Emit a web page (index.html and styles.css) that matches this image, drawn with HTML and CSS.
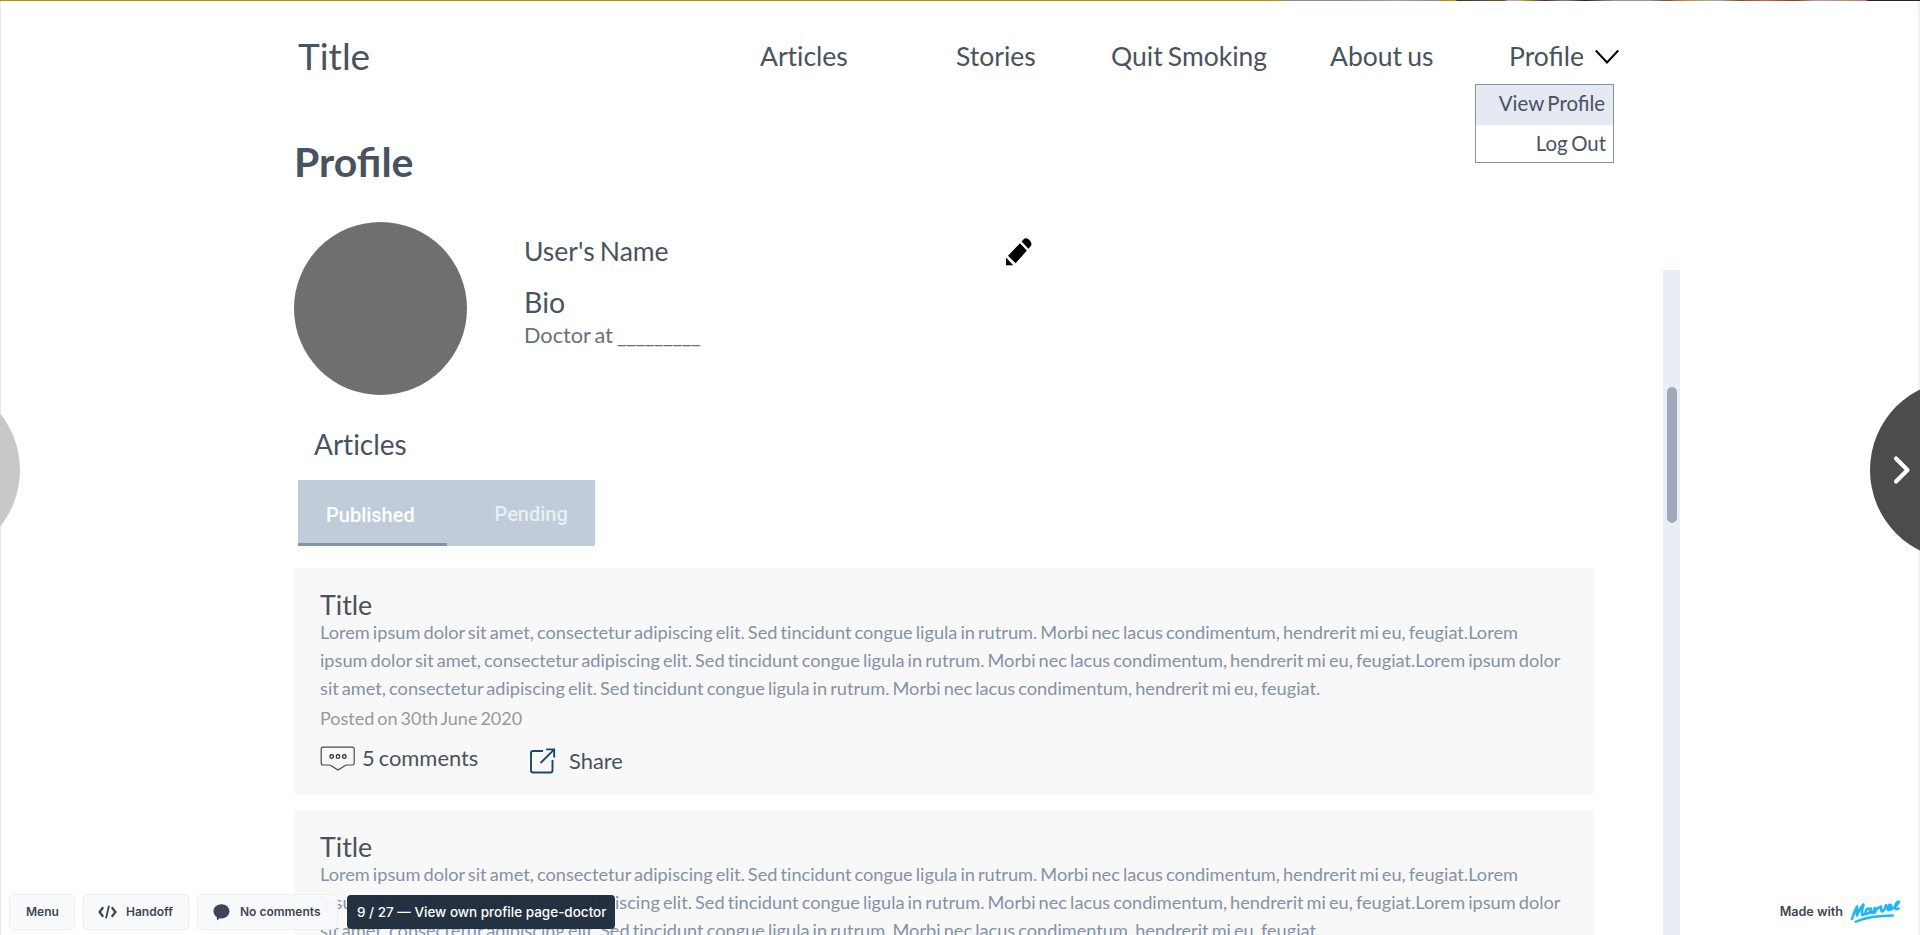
FILE: index.html
```html
<!DOCTYPE html>
<html lang="en">
<head>
<meta charset="utf-8">
<title>View own profile page-doctor</title>
<link rel="stylesheet" href="styles.css">
</head>
<body>
<div class="photo-strip"></div>
<div class="screen">
  <header class="header">
    <div class="brand">Title</div>
    <nav class="nav">
      <a>Articles</a>
      <a>Stories</a>
      <a>Quit Smoking</a>
      <a>About us</a>
      <div class="account">
        <a class="liga">Profile</a>
        <svg class="chevron" width="26" height="16" viewBox="0 0 26 16"><path d="M1.8 1.5 13 13.5 24.2 1.5" fill="none" stroke="#000" stroke-width="2"/></svg>
        <div class="menu">
          <a class="menu-item active liga">View Profile</a>
          <a class="menu-item">Log Out</a>
        </div>
      </div>
    </nav>
  </header>

  <main class="main">
    <h1 class="page-title liga">Profile</h1>
    <section class="person">
      <div class="avatar"></div>
      <div class="info">
        <div class="name">User's Name</div>
        <div class="bio">Bio</div>
        <div class="job">Doctor at <span class="blank">_________</span></div>
      </div>
      <svg class="pencil" width="26" height="28" viewBox="0 0 26 28"><path d="M14 5.2 20.8 12.6 9.6 25.3 2 17.8ZM15.6 3.6 17.4 1.5Q19.6-.8 22.6 1.3L24.4 3.2Q26.5 6 24.6 8.2L22.4 10.8ZM0 19.4 7.3 27.2H0Z"/></svg>
    </section>
    <h2 class="section-title">Articles</h2>
    <div class="tabs">
      <div class="tab current"><span>Published</span></div>
      <div class="tab"><span class="pending">Pending</span></div>
    </div>
    <div class="list">
      <article class="card">
        <h3 class="card-title">Title</h3>
        <p class="text">Lorem ipsum dolor sit amet, consectetur adipiscing elit. Sed tincidunt congue ligula in rutrum. Morbi nec lacus condimentum, hendrerit mi eu, feugiat.Lorem<br>ipsum dolor sit amet, consectetur adipiscing elit. Sed tincidunt congue ligula in rutrum. Morbi nec lacus condimentum, hendrerit mi eu, feugiat.Lorem ipsum dolor<br>sit amet, consectetur adipiscing elit. Sed tincidunt congue ligula in rutrum. Morbi nec lacus condimentum, hendrerit mi eu, feugiat.</p>
        <p class="posted">Posted on 30th June 2020</p>
        <div class="actions">
          <svg class="bubble" width="36" height="26" viewBox="0 0 36 26" fill="none" stroke="#4a4a4a" stroke-width="1.2"><path d="M3 1.2H32.5Q34.2 1.2 34.2 3V17Q34.2 19 32.5 19H27Q25.5 19 24 20.2L18 24 12 20.2Q10.5 19 9 19H3Q1.2 19 1.2 17V3Q1.2 1.2 3 1.2Z"/><g stroke="#222"><circle cx="11.7" cy="10.5" r="1.8"/><circle cx="18" cy="10.5" r="1.8"/><circle cx="24.3" cy="10.5" r="1.8"/></g></svg>
          <span class="comments">5 comments</span>
          <svg class="share-icon" width="26" height="26" viewBox="0 0 26 26" fill="none" stroke="#144a6b" stroke-width="1.9"><path d="M13 3H3Q1 3 1 5V22.5Q1 24.5 3 24.5H20.5Q22.5 24.5 22.5 22.5V12M16 1.4H24.2V9.5M24 1.6 10.5 15"/></svg>
          <span class="share">Share</span>
        </div>
      </article>
      <article class="card">
        <h3 class="card-title">Title</h3>
        <p class="text">Lorem ipsum dolor sit amet, consectetur adipiscing elit. Sed tincidunt congue ligula in rutrum. Morbi nec lacus condimentum, hendrerit mi eu, feugiat.Lorem<br>ipsum dolor sit amet, consectetur adipiscing elit. Sed tincidunt congue ligula in rutrum. Morbi nec lacus condimentum, hendrerit mi eu, feugiat.Lorem ipsum dolor<br>sit amet, consectetur adipiscing elit. Sed tincidunt congue ligula in rutrum. Morbi nec lacus condimentum, hendrerit mi eu, feugiat.</p>
      </article>
    </div>
  </main>
  <div class="track"><div class="thumb"></div></div>
</div>

<svg class="arrow prev" width="20" height="180" viewBox="0 0 20 180"><circle cx="-70" cy="90" r="90" fill="#c8c8c8"/></svg>
<svg class="arrow next" width="50" height="180" viewBox="0 0 50 180"><circle cx="90" cy="90" r="90" fill="#4c4c4c"/><path d="M26 78.5 37.5 90 26 101.5" fill="none" stroke="#fff" stroke-width="4.2" stroke-linecap="round" stroke-linejoin="round"/></svg>

<footer class="toolbar">
  <div class="btn b-menu"><span>Menu</span></div>
  <div class="btn b-handoff"><svg width="19" height="14" viewBox="0 0 19 14" fill="none" stroke="#3b4754" stroke-width="2.3"><path d="M5.2 2.2 1.6 7 5.2 11.8M13.8 2.2 17.4 7 13.8 11.8"/><path d="M11 .8 8 13.2" stroke-width="1.8"/></svg><span>Handoff</span></div>
  <div class="btn b-comments"><svg width="17" height="17" viewBox="0 0 17 17" fill="#3b4754"><path d="M8.5.3C13 .3 16.4 3.3 16.4 7.3S13 14.4 8.5 14.4Q7.5 14.4 6.6 14.2L4 16.6 3.8 13.1C1.7 11.8.5 9.7.5 7.3.5 3.3 4 .3 8.5.3Z"/></svg><span>No comments</span></div>
  <div class="crumb"><span>9 / 27 — View own profile page-doctor</span></div>
  <div class="made"><span>Made with</span>
    <svg width="52" height="24" viewBox="0 0 52 24" fill="none" stroke="#1fb6ff" stroke-linecap="round" stroke-linejoin="round" stroke-width="2.6"><path d="M2 19Q4 12 7 6.5 6.5 11 6.8 15.5 9 9 13.5 4.5 11.5 10 12 14.5Q13 15.5 15 13.5"/><path d="M20.5 9Q17 7.5 15.8 11 15 14.5 17.5 14 20 12.5 21 8.5 20 13.5 22 13 24 12 24.8 8 25.6 9.5 24.6 12.8 26 8.5 29 7.5M31 6.5Q30.5 10.5 32 11.5 35.5 9.5 36 5.2M37.5 8.5Q42 7.5 41 5 38.5 4 37.5 8.5 37.8 12 43 8.2 48 4.5 49 1.8 46.5 1 45.3 6 44.8 10.5 48.5 8.5"/><path d="M5.5 21.8Q20 15.5 43 15.5" stroke-width="2.3"/></svg>
  </div>
</footer>
</body>
</html>
```
FILE: styles.css
```css
* { box-sizing: border-box; }
html, body { margin: 0; width: 1920px; height: 935px; overflow: hidden; }
body { background: #fff; font-family: Lato, "Open Sans", sans-serif; font-variant-ligatures: none; word-spacing: -.1em; color: #485360; position: relative; }
h1, h2, h3, p { margin: 0; font-weight: 400; }
a, span { white-space: nowrap; }
svg { display: block; flex: none; }
.liga { font-variant-ligatures: normal; }

.photo-strip {
  height: 1px;
  background: linear-gradient(90deg, #b39400 0 1277px, #a08888 1284px 1350px, #a89ca2 1400px, #998085 1440px, #b39400 1442px 1456px, #30342e 1457px, #6b4c32 1490px 1504px, #b5a898 1508px 1520px, #b39400 1526px, #473044 1545px, #8e7d83 1565px, #2c2030 1585px, #9d98a0 1615px 1650px, #685448 1665px, #cf7b10 1680px, #b9a46b 1700px, #96b0b4 1720px, #8c4b24 1740px, #ba6958 1765px, #8c3c19 1795px, #b9a092 1815px, #b97d65 1866px, #1b2926 1868px);
}
.screen { height: 934px; border-left: 1px solid #e9e9e9; border-right: 2px solid #f1f1f1; position: relative; overflow: hidden; }

.header { display: flex; height: 119px; padding: 33px 0 0 297px; }
.brand { width: 462px; font-size: 37px; line-height: 44px; }
.nav { display: grid; grid-template-columns: 196px 155px 219px 179px auto; font-size: 26.5px; line-height: 44px; align-items: start; }
.account { display: flex; position: relative; gap: 10px; }
.chevron { margin-top: 15px; }
.menu { position: absolute; left: -34px; top: 50px; width: 139px; height: 79px; border: 1px solid #8492a6; background: #fff; font-size: 20.4px; line-height: 37px; text-align: right; }
.menu-item { display: block; height: 38px; padding-right: 7px; }
.menu-item.active { background: #e5e9f2; height: 40px; padding-right: 8px; }

.main { padding-left: 293px; width: 1593px; }
.page-title { font-size: 41px; line-height: 50px; font-weight: 700; margin-top: 17px; }
.person { display: flex; margin-top: 35px; height: 173px; }
.avatar { width: 173px; height: 173px; border-radius: 50%; background: #6f6f6f; }
.info { width: 481px; margin-left: 57px; padding-top: 13px; }
.name { font-size: 26.5px; line-height: 32px; }
.bio { font-size: 28.5px; line-height: 36px; margin-top: 17px; }
.job { font-size: 21.7px; line-height: 31px; color: #68717b; }
.blank { letter-spacing: -.7px; }
.pencil { margin-top: 16px; margin-left: 1px; }
.section-title { font-size: 28px; line-height: 36px; margin: 31px 0 0 20px; }
.tabs { display: flex; width: 297px; height: 66px; margin: 18px 0 0 4px; background: #c0ccda; font: 500 20px/24px Roboto, sans-serif; color: #fff; }
.tab { width: 149px; padding: 23px 0 0 28px; }
.tab.current { border-bottom: 3px solid #8492a6; }
.pending { color: rgba(255,255,255,.7); margin-left: 20px; position: relative; top: -1px; }
.list { display: grid; gap: 16px; margin-top: 22px; }
.card { height: 226px; background: #f8f8f8; padding: 24px 0 0 26px; }
.card-title { font-size: 26.8px; line-height: 26px; }
.text { font-size: 18.2px; line-height: 28px; color: #8492a6; white-space: nowrap; }
.posted { font-size: 18px; line-height: 28px; margin-top: 2px; color: #999; }
.actions { display: flex; margin-top: 13px; font-size: 21.9px; line-height: 26px; }
.bubble { margin-top: 1px; }
.comments { margin-left: 6px; width: 168px; }
.share-icon { margin-top: 3px; }
.share { margin: 3px 0 0 13px; }

.track { position: absolute; left: 1662px; top: 269px; width: 17px; height: 665px; padding: 117px 3px 0 4px; background: #e9edf6; }
.thumb { height: 136px; border-radius: 5px; background: #9eaaba; }

.arrow { position: absolute; top: 380px; }
.prev { left: 0; }
.next { right: 0; }

.toolbar { position: absolute; left: 9px; right: 18px; bottom: 5px; display: flex; align-items: center; height: 36px; font: 600 12px/34px Inter, sans-serif; word-spacing: 0; color: #3b4754; }
.btn { display: flex; align-items: center; height: 36px; border: 1px solid #eceef0; border-radius: 5px; background: rgba(249,250,252,.95); margin-right: 8px; }
.b-menu { width: 66px; padding-left: 16px; }
.b-handoff { width: 106px; padding-left: 14px; gap: 9px; }
.b-comments { width: 141px; padding-left: 15px; gap: 10px; }
.crumb { width: 268px; height: 34px; margin-left: 1px; padding-left: 10px; border-radius: 4px; background: rgba(31,45,61,.98); color: #fff; font-size: 13.5px; font-weight: 500; }
.made { display: flex; align-items: center; gap: 7px; margin-left: auto; font-size: 12.6px; }
```
